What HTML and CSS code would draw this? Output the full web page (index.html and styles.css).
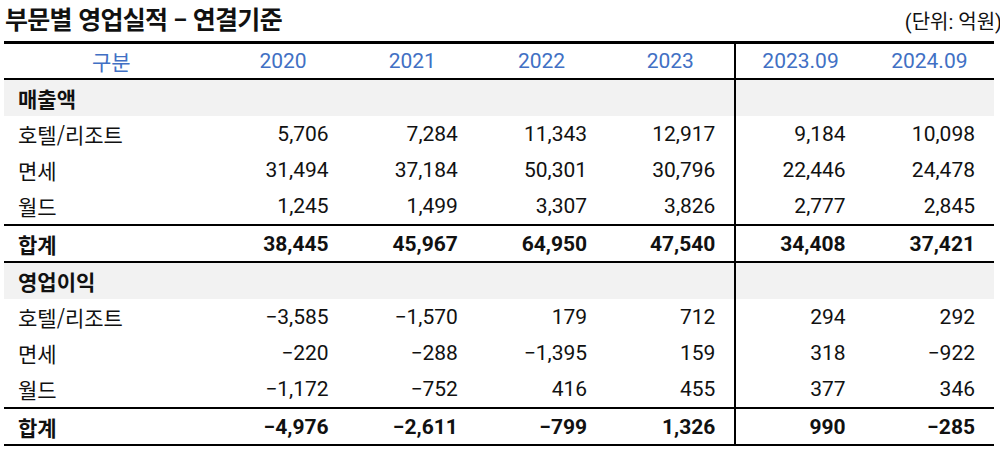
FILE: index.html
```html
<!DOCTYPE html>
<html lang="ko">
<head>
<meta charset="utf-8">
<link rel="stylesheet" href="styles.css">
</head>
<body>
<div class="page">
  <div class="head">
    <h1 class="title">부문별 영업실적 – 연결기준</h1>
    <span class="unit">(단위: 억원)</span>
  </div>
  <table class="tbl">
    <colgroup>
      <col class="c-label"><col class="c-num"><col class="c-num"><col class="c-num"><col class="c-num"><col class="c-num"><col class="c-num">
    </colgroup>
    <thead>
      <tr class="hdr">
        <th>구분</th><th>2020</th><th>2021</th><th>2022</th><th>2023</th><th class="split">2023.09</th><th>2024.09</th>
      </tr>
    </thead>
    <tbody>
      <tr class="section"><td>매출액</td><td></td><td></td><td></td><td></td><td class="split"></td><td></td></tr>
      <tr><td>호텔/리조트</td><td>5,706</td><td>7,284</td><td>11,343</td><td>12,917</td><td class="split">9,184</td><td>10,098</td></tr>
      <tr><td>면세</td><td>31,494</td><td>37,184</td><td>50,301</td><td>30,796</td><td class="split">22,446</td><td>24,478</td></tr>
      <tr><td>월드</td><td>1,245</td><td>1,499</td><td>3,307</td><td>3,826</td><td class="split">2,777</td><td>2,845</td></tr>
      <tr class="total"><td>합계</td><td>38,445</td><td>45,967</td><td>64,950</td><td>47,540</td><td class="split">34,408</td><td>37,421</td></tr>
      <tr class="section"><td>영업이익</td><td></td><td></td><td></td><td></td><td class="split"></td><td></td></tr>
      <tr><td>호텔/리조트</td><td>−3,585</td><td>−1,570</td><td>179</td><td>712</td><td class="split">294</td><td>292</td></tr>
      <tr><td>면세</td><td>−220</td><td>−288</td><td>−1,395</td><td>159</td><td class="split">318</td><td>−922</td></tr>
      <tr><td>월드</td><td>−1,172</td><td>−752</td><td>416</td><td>455</td><td class="split">377</td><td>346</td></tr>
      <tr class="total"><td>합계</td><td>−4,976</td><td>−2,611</td><td>−799</td><td>1,326</td><td class="split">990</td><td>−285</td></tr>
    </tbody>
  </table>
</div>
</body>
</html>
```

FILE: styles.css
```css
html, body {
  margin: 0;
  padding: 0;
  background: #ffffff;
}
body {
  font-family: Roboto, "Noto Sans CJK KR", "Liberation Sans", sans-serif;
  color: #111111;
}
.page {
  width: 990px;
  padding-left: 4px;
}
.head {
  display: flex;
  justify-content: space-between;
  align-items: flex-end;
  height: 41px;
}
.title {
  margin: 0 0 0 1px;
  font-family: "Noto Sans CJK KR", sans-serif;
  font-size: 25px;
  font-weight: 700;
  line-height: 36px;
  letter-spacing: -0.7px;
  color: #111111;
  align-self: flex-start;
}
.unit {
  font-family: Roboto, "Noto Sans CJK KR", sans-serif;
  font-size: 20px;
  line-height: 24px;
  margin-right: -8px;
  margin-bottom: 7px;
  color: #111111;
}
.tbl {
  width: 990px;
  border-collapse: collapse;
  table-layout: fixed;
  border-top: 3px solid #000000;
  border-bottom: 2px solid #000000;
}
.c-label { width: 214px; }
.c-num { width: 129px; }
.tbl th, .tbl td {
  padding: 0 19px 0 0;
  height: 36px;
  font-size: 21px;
  text-align: right;
  white-space: nowrap;
}
.tbl td:first-child {
  text-align: left;
  padding-left: 14px;
  font-family: "Noto Sans CJK KR", sans-serif;
  font-size: 21px;
}
.hdr th {
  height: 34px;
  font-weight: 400;
  color: #4170c4;
  text-align: center;
  padding: 0;
  border-bottom: 2px solid #000000;
}
.hdr th:first-child {
  font-family: "Noto Sans CJK KR", sans-serif;
}
.split {
  border-left: 2px solid #000000;
}
.section td {
  background: #f2f2f2;
  font-weight: 700;
}
.total td {
  height: 35px;
  font-weight: 700;
  border-top: 2px solid #000000;
  border-bottom: 2px solid #000000;
}
```
